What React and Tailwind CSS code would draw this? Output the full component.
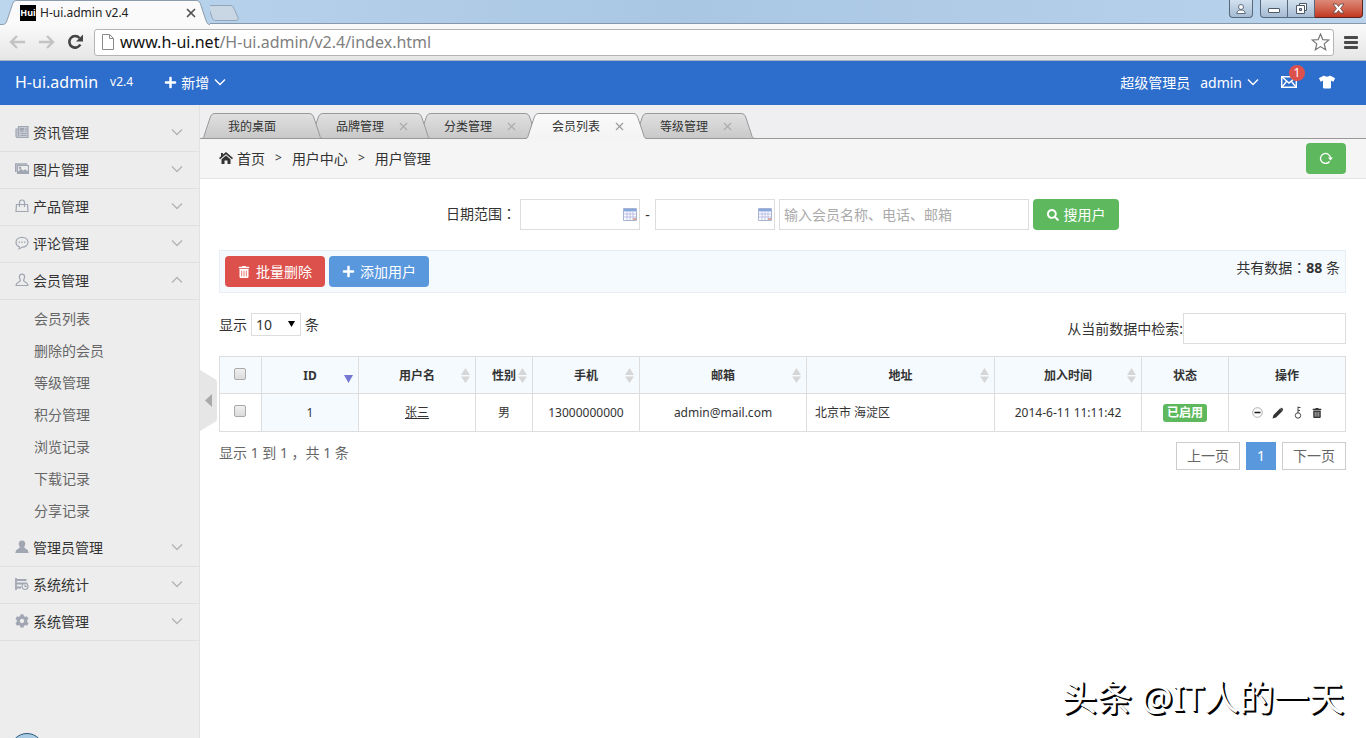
import React, { useState } from 'react';
import { FaPlus, FaSearch, FaTrashAlt, FaTshirt, FaCog } from 'react-icons/fa';
import { X } from 'lucide-react';

const font = "font-['Noto_Sans','Noto_Sans_CJK_SC',sans-serif]";

const memberLinks = ['会员列表', '删除的会员', '等级管理', '积分管理', '浏览记录', '下载记录', '分享记录'];

const menus = [
    { name: '资讯管理', icon: 'news' },
    { name: '图片管理', icon: 'image' },
    { name: '产品管理', icon: 'bag' },
    { name: '评论管理', icon: 'chat' },
    { name: '会员管理', icon: 'member', children: memberLinks },
    { name: '管理员管理', icon: 'admin' },
    { name: '系统统计', icon: 'stats' },
    { name: '系统管理', icon: 'gear' },
];

// earlier tabs lie over the later ones, the active one over all
const tabs = [
    { name: '我的桌面', closable: false, layer: 'z-[5]' },
    { name: '品牌管理', closable: true, layer: 'z-[4]' },
    { name: '分类管理', closable: true, layer: 'z-[3]' },
    { name: '会员列表', closable: true, layer: 'z-[6]' },
    { name: '等级管理', closable: true, layer: 'z-[1]' },
];

const columns = [
    { name: 'ID', width: 'w-[97px]', sort: 'desc' },
    { name: '用户名', width: 'w-[117px]', sort: 'both' },
    { name: '性别', width: 'w-[57px]', sort: 'both' },
    { name: '手机', width: 'w-[107px]', sort: 'both' },
    { name: '邮箱', width: 'w-[167px]', sort: 'both' },
    { name: '地址', width: 'w-[188px]', sort: 'both' },
    { name: '加入时间', width: 'w-[147px]', sort: 'both' },
    { name: '状态', width: 'w-[87px]' },
    { name: '操作', width: 'w-[117px]' },
];

function Arrow({ up, className }) {
    return (
        <svg className={`w-[12px] h-[8px] ${className}`} viewBox="0 0 12 8" fill="none" stroke="currentColor" strokeWidth="1.400">
            <path d={up ? 'M1 6.500l5-5 5 5' : 'M1 1.500l5 5 5-5'} />
        </svg>
    );
}

// full-width colon with the dots in the middle
function Colon() {
    return <span className="font-['Noto_Sans_CJK_TC',sans-serif]">：</span>;
}

function MenuIcon({ name }) {
    const box = 'w-[14px] h-[14px] shrink-0';
    const line = { viewBox: '0 0 14 14', fill: 'none', stroke: 'currentColor', strokeWidth: 1.2, className: box };
    if (name === 'news') {
        return (
            <svg {...line}>
                <path d="M3.5 1.5h9.5v11H2.500a1.500 1.500 0 0 1-1.500-1.500V4h2.500z" fill="#c6cad3" />
                <path d="M3.500 4v7.500M5.500 6.500h3M5.500 8.500h6M5.500 10.500h6M10 4h2M10 6h2" />
                <path d="M5.500 3.500h3v1.500h-3z" fill="currentColor" />
            </svg>
        );
    }
    if (name === 'image') {
        return (
            <svg {...line}>
                <path d="M.8 10V2h11.500" strokeWidth="1.600" />
                <path d="M2.500 3.500h11v8h-11z" />
                <path d="M3 11l3-3.500 2 2 2-1.500 3 2v1.500H3z" fill="currentColor" />
                <circle cx="5" cy="5.800" r="0.600" />
            </svg>
        );
    }
    if (name === 'bag') {
        return (
            <svg {...line}>
                <path d="M1.500 5.500h11l.5 7H1z" />
                <path d="M4.500 8V3.500a2.500 2.500 0 0 1 5 0V8" />
            </svg>
        );
    }
    if (name === 'chat') {
        return (
            <svg {...line}>
                <path d="M7 1.300c3.400 0 6 2.100 6 4.900s-2.600 4.900-5.500 4.900c-1 0-1.300 1.400-3.500 1.700.6-.8.5-1.400.3-2.100C2.300 9.900 1 8.200 1 6.200c0-2.800 2.600-4.900 6-4.900z" />
                <path d="M3.700 6.300h1.300M6.400 6.300h1.300M9.100 6.300h1.300" strokeWidth="1.500" />
            </svg>
        );
    }
    if (name === 'member' || name === 'admin') {
        return (
            <svg {...line} fill={name === 'admin' ? 'currentColor' : 'none'}>
                <path d="M7 1.200c1.800 0 2.700 1.200 2.600 2.800-.1 1.600-1 2.300-1 3.600 0 1.600 4.400 1.300 4.400 4.900H1c0-3.600 4.400-3.300 4.400-4.900 0-1.300-.9-2-1-3.600C4.300 2.400 5.200 1.200 7 1.200z" />
            </svg>
        );
    }
    if (name === 'stats') {
        return (
            <svg {...line}>
                <path d="M1 1v12M2 3h9.500M2 6.500h10.500M2 10.500h4" strokeWidth="1.800" />
                <circle cx="10" cy="9.500" r="3" fill="#ededed" />
                <path d="M10 7.500v2h2" />
            </svg>
        );
    }
    return <FaCog className={box} />;
}

function TitleBar() {
    return (
        <div className="relative flex h-[24px] bg-linear-to-r from-[#bcd6ee] via-[#a9c6e3] to-[#b9d3ec]">
            <div className="relative w-[210px] h-[25px] z-10">
                <svg className="absolute inset-0 w-full h-full" viewBox="0 0 210 25" fill="none">
                    <path d="M0 24.500h2c3 0 4-1 5-4l5-15c1-3.500 2-5 5-5h179c3 0 4 1.500 5 5l5 15c1 3 2 4 4 4v.5H0z" fill="#fafafa" />
                    <path d="M0 24.500h2c3 0 4-1 5-4l5-15c1-3.500 2-5 5-5h179c3 0 4 1.500 5 5l5 15c1 3 2 4 4 4" stroke="#8c9cad" />
                </svg>
                <div className="relative flex items-center h-[25px] pl-[20px] pr-[12px] text-[12px] text-[#222]">
                    <span className="flex items-center justify-center w-[16px] h-[16px] bg-black text-white text-[9px] font-bold">Hui</span>
                    <span className="ml-[4px] flex-1">H-ui.admin v2.4</span>
                    <button type="button" aria-label="关闭标签页" className="text-[#555]"><X size={14} strokeWidth={3} /></button>
                </div>
            </div>
            <div className="w-[34px] border-b border-[#8798ab]">
                <svg className="w-[32px] h-[22px]" viewBox="0 0 32 22" fill="#c9d6e4" stroke="#92a6bb">
                    <path d="M0 5.500h20c2 0 3 .5 4 3l4 9c.6 2-.3 3-2 3H6c-2 0-3-.5-4-3L-1 8.500c-.5-2 0-3 1-3z" />
                </svg>
            </div>
            <div className="flex-1 border-b border-[#8798ab]" />
            <div className="flex items-start h-[24px] pr-[3px] border-b border-[#8798ab] text-white">
                <button type="button" aria-label="用户" className="flex items-center justify-center w-[24px] h-[18px] mr-[7px] rounded-b-[4px] border border-t-0 border-[#56687c] bg-linear-to-b from-[#d3e1ef] to-[#a5bbd2]">
                    <svg className="w-[10px] h-[12px]" viewBox="0 0 10 12" fill="#fff" stroke="#5d6c7c">
                        <circle cx="5" cy="4" r="2.500" />
                        <path d="M.8 10.500c0-2.500 2-3.500 4.200-3.500s4.200 1 4.200 3.500z" />
                    </svg>
                </button>
                <button type="button" aria-label="最小化" className="flex items-end justify-center w-[28px] h-[18px] pb-[4px] rounded-bl-[4px] border border-t-0 border-[#56687c] bg-linear-to-b from-[#d3e1ef] to-[#a5bbd2]">
                    <span className="w-[12px] h-[5px] bg-white border border-[#4c5866] rounded-[1px]" />
                </button>
                <button type="button" aria-label="还原" className="flex items-center justify-center w-[27px] h-[18px] border-b border-r border-[#56687c] bg-linear-to-b from-[#d3e1ef] to-[#a5bbd2]">
                    <svg className="w-[13px] h-[13px]" viewBox="0 0 13 13" fill="#fff" stroke="#4c5866">
                        <path d="M4.500 1.500h7v7h-7z" />
                        <path d="M1.500 3.500h8v8h-8z" />
                        <path d="M4.500 6.500h2v2h-2z" fill="#9fb3c8" />
                    </svg>
                </button>
                <button type="button" aria-label="关闭" className="flex items-center justify-center w-[48px] h-[18px] rounded-br-[4px] border border-l-0 border-t-0 border-[#5b2420] bg-linear-to-b from-[#dd8a78] to-[#c2361f]">
                    <svg className="w-[13px] h-[11px]" viewBox="0 0 13 11" fill="#fff" stroke="#5c4040" strokeWidth="0.800">
                        <path d="M1 1h3.500l2 2.500 2-2.500H12L8.500 5.500 12 10H8.500l-2-2.500-2 2.500H1l3.500-4.500z" />
                    </svg>
                </button>
            </div>
        </div>
    );
}

function AddressBar() {
    return (
        <div className="flex items-center h-[37px] pl-[9px] pr-[8px] bg-linear-to-b from-[#fafafa] to-[#e6e6e6] border-b border-[#a9b4c2]">
            <button type="button" aria-label="后退" className="text-[#c3c3c3]">
                <svg className="w-[17px] h-[14px]" viewBox="0 0 17 14" fill="none" stroke="currentColor" strokeWidth="2.400"><path d="M16 7H2.500M8 1L2 7l6 6" /></svg>
            </button>
            <button type="button" aria-label="前进" className="ml-[12px] text-[#c3c3c3]">
                <svg className="w-[17px] h-[14px]" viewBox="0 0 17 14" fill="none" stroke="currentColor" strokeWidth="2.400"><path d="M1 7h13.500M9 1l6 6-6 6" /></svg>
            </button>
            <button type="button" aria-label="刷新" className="ml-[12px] text-[#444]">
                <svg className="w-[17px] h-[16px]" viewBox="0 0 17 16" fill="none" stroke="currentColor" strokeWidth="2.600">
                    <path d="M13.300 10.500A5.800 5.800 0 1 1 12.500 4" />
                    <path d="M16 .5v7H9z" fill="currentColor" stroke="none" />
                </svg>
            </button>
            <div className="flex items-center flex-1 h-[27px] ml-[10px] px-[7px] bg-white border border-[#b4b4b4] rounded-[3px]">
                <svg className="w-[12px] h-[16px]" viewBox="0 0 12 16" fill="#fff" stroke="#8a8a8a"><path d="M.5.500h7l4 4v11H.5zM7.500.500v4h4" /></svg>
                <div className="flex-1 ml-[6px] text-[16px] leading-[24px] text-[#808080]"><span className="text-[#111]">www.h-ui.net</span>/H-ui.admin/v2.4/index.html</div>
                <svg className="w-[19px] h-[18px] -mr-[4px]" viewBox="0 0 19 18" fill="#fff" stroke="#777" strokeWidth="1.200"><path d="M9.500 1l2.300 5.600 6 .4-4.600 3.900 1.500 5.900-5.200-3.200-5.200 3.200 1.500-5.900L1.200 7l6-.4z" /></svg>
            </div>
            <button type="button" aria-label="菜单" className="flex flex-col gap-[2px] ml-[10px]">
                <span className="w-[14px] h-[3px] rounded-[1px] bg-[#4a4a4a]" />
                <span className="w-[14px] h-[3px] rounded-[1px] bg-[#4a4a4a]" />
                <span className="w-[14px] h-[3px] rounded-[1px] bg-[#4a4a4a]" />
            </button>
        </div>
    );
}

function Header() {
    return (
        <header className="flex items-center h-[44px] pl-[15px] pr-[31px] pb-[2px] bg-[#2d6dcc] text-white text-[14px]">
            <a href="#" className="text-[16px]">H-ui.admin</a>
            <span className="ml-[12px] text-[12px]">v2.4</span>
            <button type="button" className="flex items-center ml-[31px]">
                <FaPlus size={13} />
                <span className="ml-[4px]">新增</span>
                <Arrow className="ml-[5px]" />
            </button>
            <div className="flex items-center ml-auto">
                <span>超级管理员</span>
                <button type="button" className="flex items-center ml-[10px]">admin<Arrow className="ml-[5px]" /></button>
                <a href="#" aria-label="消息" className="relative ml-[22px]">
                    <svg className="w-[16px] h-[12px]" viewBox="0 0 16 12" fill="none" stroke="currentColor" strokeWidth="1.400">
                        <path d="M.7.700h14.600v10.600H.7z" />
                        <path d="M1 1l7 6 7-6M1 11l4.500-5.500M15 11l-4.500-5.500" />
                    </svg>
                    <span className="absolute left-[8px] -top-[11px] flex items-center justify-center w-[16px] h-[16px] rounded-full bg-[#dd514c] text-[12px]">1</span>
                </a>
                <a href="#" aria-label="换肤" className="ml-[22px]"><FaTshirt size={16} /></a>
            </div>
        </header>
    );
}

function Sidebar() {
    return (
        <aside className="relative w-[199px] shrink-0 pt-[10px] bg-[#ededed] text-[14px] overflow-hidden">
            {menus.map((menu) => (
                <div key={menu.name}>
                    <button type="button" className="flex items-center w-full h-[37px] pl-[15px] pr-[16px] pb-[2px] border-b border-[#e0e0e0] text-[#333]">
                        <span className="text-[#a0a6b2]"><MenuIcon name={menu.icon} /></span>
                        <span className="ml-[4px]">{menu.name}</span>
                        <Arrow up={Boolean(menu.children)} className="ml-auto text-[#b4b4b4]" />
                    </button>
                    {menu.children && (
                        <ul className="py-[3px]">
                            {menu.children.map((item) => (
                                <li key={item}><a href="#" className="block pl-[34px] leading-[32px] text-[#666]">{item}</a></li>
                            ))}
                        </ul>
                    )}
                </div>
            ))}
            <div className="absolute left-[10px] -bottom-[29px] w-[34px] h-[34px] rounded-full border border-[#2d5878] bg-[#a9cbe4]" />
        </aside>
    );
}

function TabBar() {
    return (
        <div className="relative z-0 flex h-[34px] pt-[8px] pl-[2px] bg-[#efeef0] border-b border-[#999] text-[12px] text-[#333]">
            {tabs.map((tab, index) => {
                const active = index === 3;
                return (
                    <div key={tab.name} className={`relative w-[108px] h-[26px] ${tab.layer}`}>
                        <svg className="absolute left-0 top-0 w-[121px] h-[26px]" viewBox="0 0 121 26" fill="none">
                            <defs>
                                <linearGradient id={`tab${index}`} x1="0" y1="0" x2="0" y2="1">
                                    <stop offset="0" stopColor={active ? '#fafafa' : '#e0e0e0'} />
                                    <stop offset="1" stopColor={active ? '#f3f3f3' : '#c8c8c8'} />
                                </linearGradient>
                            </defs>
                            <path d="M0 26C2 25 2 23 3 20L8 5C9 2 10 .5 13 .5h94c3 0 4 1.500 5 4.500l5 15c1 3 1 5 3.500 6z" fill={`url(#tab${index})`} />
                            <path d="M0 25.500C2 25 2 23 3 20L8 5C9 2 10 .5 13 .5h94c3 0 4 1.500 5 4.500l5 15c1 3 1 5 3.500 5.500" stroke="#999" />
                            {!active && <path d="M0 25.500h121" stroke="#999" />}
                        </svg>
                        <div className="relative flex items-center h-[26px] pt-[1px] pl-[26px]">
                            <a href="#" className="whitespace-nowrap">{tab.name}</a>
                            {tab.closable && (
                                <button type="button" aria-label="关闭" className={active ? 'ml-[13px] text-[#999]' : 'ml-[13px] text-[#aaa]'}><X size={13} /></button>
                            )}
                        </div>
                    </div>
                );
            })}
        </div>
    );
}

function SortMark({ type }) {
    if (type === 'desc') {
        return <svg className="absolute right-[5px] top-[18px] w-[9px] h-[8px]" viewBox="0 0 9 8" fill="#7478d0"><path d="M0 0h9L4.500 8z" /></svg>;
    }
    return (
        <svg className="absolute right-[5px] top-[11px] w-[9px] h-[15px]" viewBox="0 0 9 15" fill="#d6d6d6">
            <path d="M0 7h9L4.500 0zM0 8.500h9L4.500 15z" />
        </svg>
    );
}

function DateInput({ label }) {
    return (
        <div className="relative">
            <input type="text" aria-label={label} className="block w-[120px] h-[31px] px-[4px] bg-white border border-[#ddd]" />
            <svg className="absolute right-[3px] top-[9px] w-[14px] h-[13px]" viewBox="0 0 14 13" fill="none">
                <path d="M.5.500h13v12H.5z" fill="#fff" stroke="#a9b3d6" />
                <path d="M1 1h12v2.500H1z" fill="#86a8dd" />
                <path d="M1 6h12M1 9h12M4 4v8M7 4v8M10 4v8" stroke="#b9bfe4" />
                <path d="M10 10h3v2h-3z" fill="#e0a79b" />
            </svg>
        </div>
    );
}

function CheckBox({ label, checked, setChecked }) {
    return (
        <input
            type="checkbox"
            aria-label={label}
            checked={checked}
            onChange={() => setChecked(!checked)}
            className="block mx-auto size-[12px] appearance-none rounded-[2px] border border-[#aaa] bg-linear-to-b from-[#efefef] to-[#dcdcdc] checked:from-[#5a98de] checked:to-[#5a98de]"
        />
    );
}

function MemberTable({ checked, setChecked }) {
    const cell = 'h-[38px] px-[8px] border border-[#ddd] text-center';
    return (
        <table className="w-full mt-[12px] table-fixed border-collapse text-[12px] text-[#333] bg-white">
            <thead>
                <tr className="bg-[#f5fafe]">
                    <th className="w-[42px] h-[37px] pr-[2px] pb-[3px] border border-[#ddd]">
                        <CheckBox label="全选" checked={checked} setChecked={setChecked} />
                    </th>
                    {columns.map((col) => (
                        <th key={col.name} className={`${col.width} relative h-[37px] pt-[2px] border border-[#ddd] font-bold`}>
                            {col.name}
                            {col.sort && <SortMark type={col.sort} />}
                        </th>
                    ))}
                </tr>
            </thead>
            <tbody>
                <tr>
                    <td className="h-[38px] pr-[2px] pb-[3px] border border-[#ddd]">
                        <CheckBox label="选择张三" checked={checked} setChecked={setChecked} />
                    </td>
                    <td className={`${cell} bg-[#f5fafe]`}>1</td>
                    <td className={cell}><a href="#" className="underline">张三</a></td>
                    <td className={cell}>男</td>
                    <td className={cell}>13000000000</td>
                    <td className={cell}>admin@mail.com</td>
                    <td className="h-[38px] px-[8px] border border-[#ddd] text-left">北京市 海淀区</td>
                    <td className={cell}>2014-6-11 11:11:42</td>
                    <td className={cell}><span className="inline-block px-[4px] leading-[18px] rounded-[3px] bg-[#5eb95e] text-white font-bold">已启用</span></td>
                    <td className={cell}>
                        <div className="flex items-center justify-center gap-[9px]">
                            <button type="button" aria-label="停用">
                                <svg className="w-[11px] h-[11px]" viewBox="0 0 11 11" fill="none"><circle cx="5.500" cy="5.500" r="4.800" stroke="#999" strokeWidth="0.800" /><path d="M2.500 5.500h6" stroke="#222" strokeWidth="1.600" /></svg>
                            </button>
                            <button type="button" aria-label="编辑">
                                <svg className="w-[12px] h-[12px]" viewBox="0 0 12 12" fill="#333"><path d="M.5 11.500l1-3.500L8 1.500 10.500 4 4 10.500zM8.700.900c.8-.8 3.200 1.300 2.300 2.500l-.5.300L8.300 1.300z" /></svg>
                            </button>
                            <button type="button" aria-label="修改密码">
                                <svg className="w-[10px] h-[13px]" viewBox="0 0 10 13" fill="none" stroke="#444"><circle cx="5" cy="9.500" r="2.700" /><path d="M5 7V.5M5 1.500h2.500M5 4.500h2" /></svg>
                            </button>
                            <button type="button" aria-label="删除"><FaTrashAlt size={10} /></button>
                        </div>
                    </td>
                </tr>
            </tbody>
        </table>
    );
}

function App() {
    const [checked, setChecked] = useState(false);

    return (
        <div className={`${font} relative flex flex-col min-h-screen bg-white text-[#333] overflow-hidden`}>
            <TitleBar />
            <AddressBar />
            <Header />
            <div className="flex flex-1">
                <Sidebar />
                <main className="relative flex-1 min-w-0 border-l border-[#e2e2e2] text-[14px]">
                    <TabBar />
                    <nav className="flex items-center h-[40px] pl-[19px] pr-5 pb-[1px] bg-[#f5f5f5] border-b border-[#e5e5e5]">
                        <svg className="w-[14px] h-[12px]" viewBox="0 0 14 12" fill="#333">
                            <path d="M7 0l7 6-1 1.200-6-5-6 5L0 6zM7 3.500l4.500 3.700V12H8.500V8.500h-3V12h-3V7.200zM2 1h2v1.500L2 4.200z" />
                        </svg>
                        <a href="#" className="ml-[4px]">首页</a>
                        <span className="mx-[10px] text-[12px]">&gt;</span>
                        <a href="#">用户中心</a>
                        <span className="mx-[10px] text-[12px]">&gt;</span>
                        <a href="#">用户管理</a>
                        <button type="button" aria-label="刷新" className="flex items-center justify-center w-[40px] h-[31px] ml-auto rounded-[4px] bg-[#5eb95e] text-white">
                            <svg className="w-[14px] h-[12px]" viewBox="0 0 14 12" fill="none" stroke="currentColor" strokeWidth="1.300"><path d="M10.500 9.500A5 5 0 1 1 11.500 6" /><path d="M9 5.500h5l-2.500 3z" fill="currentColor" stroke="none" /></svg>
                        </button>
                    </nav>
                    <div className="pl-[19px] pr-5 pt-5">
                        <form className="flex items-center justify-center gap-[4px]">
                            <span className="leading-[28px] self-start">日期范围<Colon /></span>
                            <DateInput label="开始日期" />
                            <span className="w-[7px] text-center">-</span>
                            <DateInput label="结束日期" />
                            <input type="text" aria-label="会员搜索" placeholder="输入会员名称、电话、邮箱" className="w-[250px] h-[31px] px-[4px] bg-white border border-[#ddd] placeholder:text-[#aaa]" />
                            <button type="button" className="flex items-center justify-center gap-[5px] w-[86px] h-[31px] rounded-[4px] bg-[#5eb95e] text-white"><FaSearch size={12} />搜用户</button>
                        </form>
                        <div className="flex mt-5 p-[5px] bg-[#f5fafe] border border-[#e8eef3]">
                            <button type="button" className="flex items-center justify-center gap-[6px] w-[100px] h-[31px] rounded-[4px] bg-[#dd514c] text-white"><FaTrashAlt size={12} />批量删除</button>
                            <button type="button" className="flex items-center justify-center gap-[5px] w-[100px] h-[31px] ml-[4px] rounded-[4px] bg-[#5a98de] text-white"><FaPlus size={13} />添加用户</button>
                            <span className="ml-auto leading-[22px]">共有数据<Colon /><strong>88</strong> 条</span>
                        </div>
                        <div className="flex items-start justify-between mt-5">
                            <label className="flex items-center gap-[4px]">
                                显示
                                <span className="relative">
                                    <select className="block w-[50px] h-[23px] pl-[4px] appearance-none border border-[#ddd] bg-white" defaultValue="10">
                                        <option>10</option>
                                        <option>25</option>
                                        <option>50</option>
                                    </select>
                                    <svg className="absolute right-[6px] top-[8px] w-[7px] h-[6px] pointer-events-none" viewBox="0 0 7 6" fill="#000"><path d="M0 0h7L3.500 6z" /></svg>
                                </span>
                                条
                            </label>
                            <label className="flex items-center">
                                从当前数据中检索:
                                <input type="text" className="w-[163px] h-[31px] px-[4px] bg-white border border-[#ddd]" />
                            </label>
                        </div>
                        <MemberTable checked={checked} setChecked={setChecked} />
                        <div className="flex items-start justify-between mt-[10px] text-[#666]">
                            <span className="leading-[22px]">显示 1 到 1 ，共 1 条</span>
                            <div className="flex gap-[6px]">
                                <button type="button" className="w-[64px] h-[28px] pb-[2px] border border-[#ccc] bg-white">上一页</button>
                                <button type="button" className="w-[30px] h-[28px] pb-[2px] bg-[#5a98de] text-white">1</button>
                                <button type="button" className="w-[64px] h-[28px] pb-[2px] border border-[#ccc] bg-white">下一页</button>
                            </div>
                        </div>
                    </div>
                    <button type="button" aria-label="收起菜单" className="absolute left-0 top-[265px]">
                        <svg className="w-[17px] h-[61px]" viewBox="0 0 17 61">
                            <path d="M0 0l15 9q2 1 2 3v37q0 2-2 3L0 61z" fill="#e6e6e6" />
                            <path d="M12 24v13l-7-6.500z" fill="#aaa" />
                        </svg>
                    </button>
                </main>
            </div>
            <div className="absolute right-[22px] bottom-[16px] text-[35px] leading-[48px] text-white whitespace-nowrap [text-shadow:1px_1px_0_#000,2px_2px_0_#000,-1px_-1px_0_#fff]">头条 @IT人的一天</div>
        </div>
    );
}

export default App;
